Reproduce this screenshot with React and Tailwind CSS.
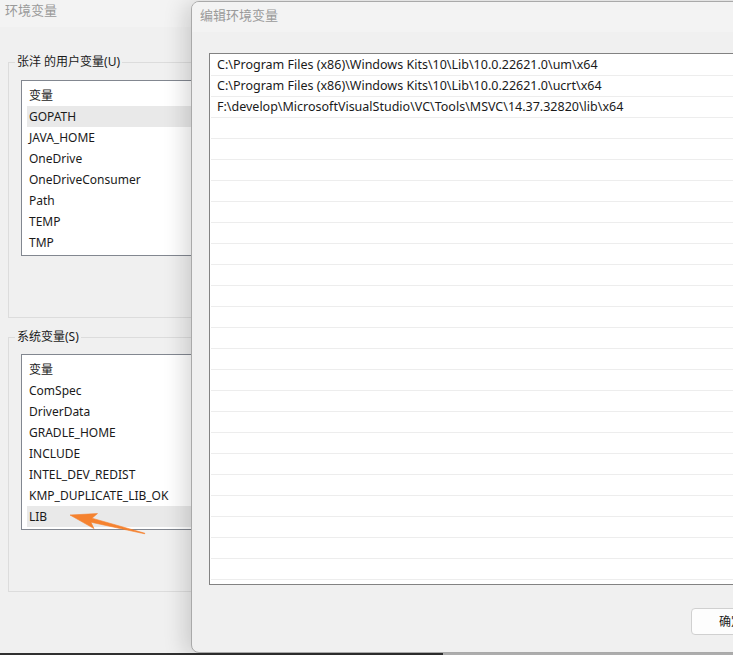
import React from "react";

const userVars = ["GOPATH", "JAVA_HOME", "OneDrive", "OneDriveConsumer", "Path", "TEMP", "TMP"];
const sysVars = ["ComSpec", "DriverData", "GRADLE_HOME", "INCLUDE", "INTEL_DEV_REDIST", "KMP_DUPLICATE_LIB_OK", "LIB"];
const paths = [
  "C:\\Program Files (x86)\\Windows Kits\\10\\Lib\\10.0.22621.0\\um\\x64",
  "C:\\Program Files (x86)\\Windows Kits\\10\\Lib\\10.0.22621.0\\ucrt\\x64",
  "F:\\develop\\MicrosoftVisualStudio\\VC\\Tools\\MSVC\\14.37.32820\\lib\\x64",
];

function VarList({ items, selected, className }) {
  return (
    <div className={`ml-[6px] w-[400px] border border-[#828790] bg-white pt-[4px] px-[5px] ${className}`}>
      <div className="flex h-[21px] items-center pl-[2px]">变量</div>
      {items.map((v) => (
        <div
          key={v}
          className={`flex h-[21px] items-center pl-[2px] ${v === selected ? "bg-[#e9e9e9]" : ""}`}
        >
          {v}
        </div>
      ))}
    </div>
  );
}

function Group({ title, children, className }) {
  return (
    <fieldset className={`ml-[8px] w-[420px] border border-[#dcdcdc] px-[6px] ${className}`}>
      <legend className="px-[2px] leading-[18px]">{title}</legend>
      {children}
    </fieldset>
  );
}

export default function App() {
  const rows = Array.from({ length: 25 }, (_, i) => paths[i] || "");
  return (
    <div className="relative h-[655px] w-[733px] overflow-hidden bg-[#f0f0f0] font-['Noto_Sans','Noto_Sans_CJK_SC',sans-serif] text-[12px] text-[#1a1a1a]">
      {/* background window */}
      <div className="flex h-[653px] flex-col">
        <div className="flex h-[27px] items-center bg-[#f3f3f3] pl-[5px] pb-[6px] text-[13px] text-[#9a9a9a]">
          环境变量
        </div>
        <Group title="张洋 的用户变量(U)" className="mt-[26px] h-[265px] pt-[9px]">
          <VarList items={userVars} selected="GOPATH" className="h-[176px]" />
        </Group>
        <Group title="系统变量(S)" className="mt-[10px] h-[264px] pt-[8px]">
          <VarList items={sysVars} selected="LIB" className="h-[176px]" />
        </Group>
      </div>
      <div className="h-[2px] bg-[linear-gradient(to_right,#303030_443px,#bdbdbd_443px)]" />

      {/* edit dialog */}
      <div className="absolute left-[191px] top-[1px] flex h-[652px] w-[580px] flex-col overflow-hidden rounded-[8px] border border-[#a9a9a9] bg-[#f0f0f0] shadow-[-6px_2px_22px_rgba(0,0,0,0.16)]">
        <div className="flex h-[30px] items-center bg-[#f3f3f3] pb-[3px] pl-[8px] text-[13px] text-[#9a9a9a]">
          编辑环境变量
        </div>
        <div className="ml-[17px] mt-[21px] h-[532px] w-[560px] border border-[#828282] bg-white px-[1px] pt-[1px] text-[12.5px]">
          {rows.map((p, i) => (
            <div key={i} className="flex h-[21px] items-center border-b border-[#ededed] pl-[6px]">
              {p}
            </div>
          ))}
        </div>
        <div className="ml-[499px] mt-[23px] flex h-[27px] w-[80px] items-center justify-center rounded-[4px] border border-[#d0d0d0] bg-[#fdfdfd]">
          确定
        </div>
      </div>

      {/* annotation arrow */}
      <svg className="pointer-events-none absolute left-0 top-0" width="733" height="655">
        <polygon
          points="70,515 97.5,513.6 92,518.2 145,533.3 144.6,533.8 90.9,522.2 94,528.6"
          fill="#f5822f"
          stroke="#f5822f"
          strokeWidth="0.6"
          strokeLinejoin="round"
        />
      </svg>
    </div>
  );
}
